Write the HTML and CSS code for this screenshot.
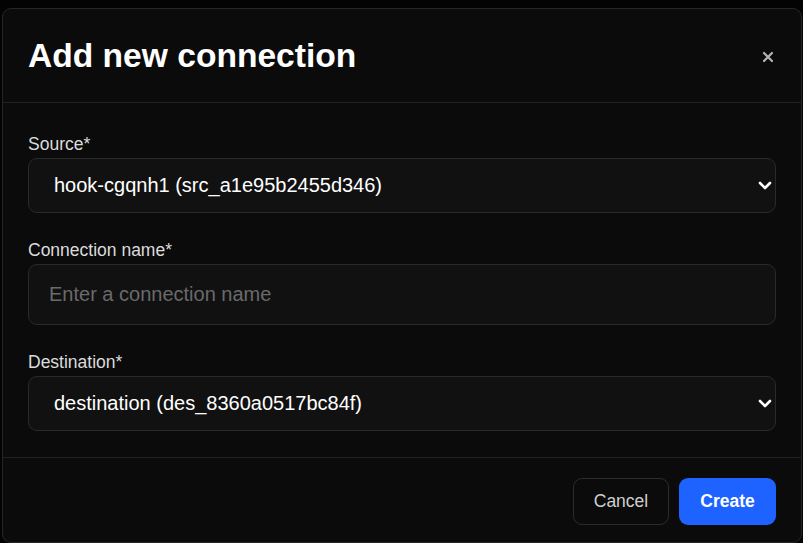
FILE: index.html
```html
<!DOCTYPE html>
<html lang="en">
<head>
<meta charset="utf-8">
<title>Add new connection</title>
<link rel="stylesheet" href="styles.css">
</head>
<body>
<div class="modal">
  <div class="modal-header">
    <h1 class="modal-title">Add new connection</h1>
    <button class="close-btn" aria-label="Close">
      <svg width="12" height="12" viewBox="0 0 12 12"><path d="M2 2 L10 10 M10 2 L2 10" stroke="#b5b5b5" stroke-width="2.2" stroke-linecap="round"/></svg>
    </button>
  </div>
  <div class="modal-body">
    <div class="field">
      <label class="field-label">Source*</label>
      <div class="select">
        <span class="select-value">hook-cgqnh1 (src_a1e95b2455d346)</span>
        <svg class="chevron" width="14" height="9" viewBox="0 0 14 9"><path d="M2 2 L7 7 L12 2" fill="none" stroke="#ffffff" stroke-width="2.6" stroke-linecap="round" stroke-linejoin="round"/></svg>
      </div>
    </div>
    <div class="field">
      <label class="field-label">Connection name*</label>
      <div class="input">
        <span class="placeholder">Enter a connection name</span>
      </div>
    </div>
    <div class="field">
      <label class="field-label">Destination*</label>
      <div class="select">
        <span class="select-value">destination (des_8360a0517bc84f)</span>
        <svg class="chevron" width="14" height="9" viewBox="0 0 14 9"><path d="M2 2 L7 7 L12 2" fill="none" stroke="#ffffff" stroke-width="2.6" stroke-linecap="round" stroke-linejoin="round"/></svg>
      </div>
    </div>
  </div>
  <div class="modal-footer">
    <button class="btn btn-cancel">Cancel</button>
    <button class="btn btn-create">Create</button>
  </div>
</div>
</body>
</html>
```

FILE: styles.css
```css
html, body {
  margin: 0;
  padding: 0;
  background: #030303;
  font-family: "Liberation Sans", Arial, sans-serif;
}

body {
  padding: 8px 1px 0 2px;
}

.modal {
  width: 800px;
  height: 535px;
  background: #0b0b0b;
  border: 1px solid #262626;
  border-radius: 9px;
  display: flex;
  flex-direction: column;
  box-sizing: border-box;
}

.modal-header {
  height: 94px;
  box-sizing: border-box;
  display: flex;
  align-items: center;
  justify-content: space-between;
  padding: 0 27px 0 25px;
  border-bottom: 1px solid #222222;
}

.modal-title {
  margin: 0;
  font-size: 33.6px;
  font-weight: 700;
  color: #ffffff;
  letter-spacing: 0;
}

.close-btn {
  background: none;
  border: none;
  padding: 0;
  width: 12px;
  height: 12px;
  display: flex;
  margin-top: 2px;
}

.modal-body {
  padding: 31px 25px 26px 25px;
  display: flex;
  flex-direction: column;
  gap: 27px;
  border-bottom: 1px solid #222222;
}

.field {
  display: flex;
  flex-direction: column;
  gap: 3px;
}

.field-label {
  font-size: 17.5px;
  line-height: 21px;
  color: #dcdcdc;
}

.select, .input {
  box-sizing: border-box;
  height: 55px;
  background: #111111;
  border: 1px solid #2a2a2a;
  border-radius: 9px;
  display: flex;
  align-items: center;
  justify-content: space-between;
  padding: 0 3px 0 25px;
}

.select-value {
  font-size: 20px;
  color: #ffffff;
}

.input {
  height: 61px;
  padding-left: 20px;
}

.placeholder {
  font-size: 20px;
  color: #6a6a6a;
}

.modal-footer {
  display: flex;
  justify-content: flex-end;
  gap: 10px;
  padding: 20px 25px 0 25px;
}

.btn {
  height: 47px;
  border-radius: 9px;
  font-family: "Liberation Sans", Arial, sans-serif;
  font-size: 17.5px;
  padding: 0;
  cursor: pointer;
}

.btn-cancel {
  width: 96px;
  background: #0b0b0b;
  border: 1px solid #2c2c2c;
  color: #cfcfcf;
}

.btn-create {
  width: 97px;
  background: #1e62ff;
  border: none;
  color: #ffffff;
  font-weight: 700;
}
```
